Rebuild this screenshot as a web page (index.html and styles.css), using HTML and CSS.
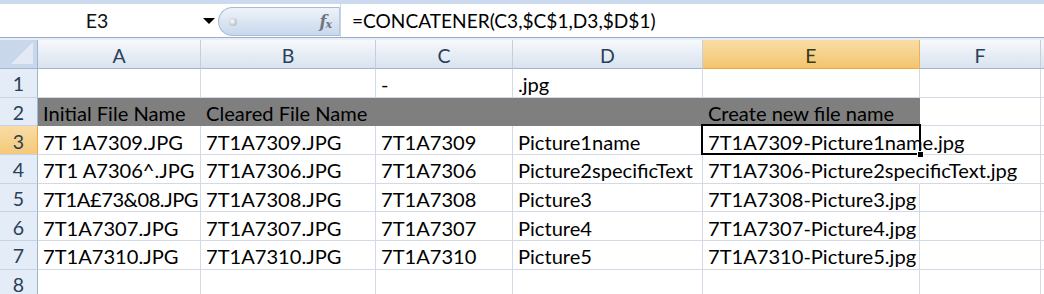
FILE: index.html
```html
<!DOCTYPE html>
<html>
<head>
<meta charset="utf-8">
<link rel="stylesheet" href="styles.css">
</head>
<body>
<div class="app">
  <div class="fbar">
    <div class="namebox">
      <span class="name">E3</span>
      <span class="arrow"></span>
    </div>
    <div class="pill">
      <span class="dot"></span>
      <span class="fx">f<sub>x</sub></span>
    </div>
    <div class="formula">=CONCATENER(C3,$C$1,D3,$D$1)</div>
  </div>
  <div class="gap"></div>
  <div class="sheet">
    <div class="corner"><span class="tri"></span></div>
    <div class="ch">A</div><div class="ch">B</div><div class="ch">C</div><div class="ch">D</div><div class="ch sel">E</div><div class="ch">F</div><div class="ch end"></div>

    <div class="rh">1</div>
    <div class="c"></div><div class="c"></div><div class="c">-</div><div class="c">.jpg</div><div class="c"></div><div class="c"></div><div class="c end"></div>

    <div class="rh">2</div>
    <div class="c g">Initial File Name</div><div class="c g">Cleared File Name</div><div class="c g"></div><div class="c g"></div><div class="c g">Create new file name</div><div class="c"></div><div class="c end"></div>

    <div class="rh sel">3</div>
    <div class="c">7T 1A7309.JPG</div><div class="c">7T1A7309.JPG</div><div class="c">7T1A7309</div><div class="c">Picture1name</div><div class="c active">7T1A7309-Picture1name.jpg<span class="handle"></span></div><div class="c"></div><div class="c end"></div>

    <div class="rh">4</div>
    <div class="c">7T1 A7306^.JPG</div><div class="c">7T1A7306.JPG</div><div class="c">7T1A7306</div><div class="c">Picture2specificText</div><div class="c nor">7T1A7306-Picture2specificText.jpg</div><div class="c"></div><div class="c end"></div>

    <div class="rh">5</div>
    <div class="c tight">7T1A£73&amp;08.JPG</div><div class="c">7T1A7308.JPG</div><div class="c">7T1A7308</div><div class="c">Picture3</div><div class="c">7T1A7308-Picture3.jpg</div><div class="c"></div><div class="c end"></div>

    <div class="rh">6</div>
    <div class="c">7T1A7307.JPG</div><div class="c">7T1A7307.JPG</div><div class="c">7T1A7307</div><div class="c">Picture4</div><div class="c">7T1A7307-Picture4.jpg</div><div class="c"></div><div class="c end"></div>

    <div class="rh">7</div>
    <div class="c">7T1A7310.JPG</div><div class="c">7T1A7310.JPG</div><div class="c">7T1A7310</div><div class="c">Picture5</div><div class="c">7T1A7310-Picture5.jpg</div><div class="c"></div><div class="c end"></div>

    <div class="rh">8</div>
    <div class="c"></div><div class="c"></div><div class="c"></div><div class="c"></div><div class="c"></div><div class="c"></div><div class="c end"></div>
  </div>
</div>
</body>
</html>
```

FILE: styles.css
```css
* { box-sizing: border-box; }
html, body { margin: 0; padding: 0; }
body {
  width: 1044px;
  height: 294px;
  overflow: hidden;
  background: #fff;
  font-family: Lato, "Open Sans", sans-serif;
  color: #000;
}
.app { display: flex; flex-direction: column; }

.fbar {
  height: 38px;
  display: flex;
  align-items: stretch;
  border-top: 4px solid #cbdaee;
  border-bottom: 1px solid #9aaecb;
  background: #fff;
}
.namebox {
  width: 218px;
  display: flex;
  align-items: center;
  position: relative;
}
.name {
  width: 194px;
  text-align: center;
  font-size: 19.5px;
  color: #111;
}
.arrow {
  width: 0; height: 0;
  border-left: 6px solid transparent;
  border-right: 6px solid transparent;
  border-top: 6px solid #000;
  margin-left: 9px;
}
.pill {
  width: 122px;
  margin: 3px 0 1px 0;
  border: 1px solid #a5bad6;
  border-right: 1px solid #b8c8dd;
  border-radius: 15px 0 0 15px;
  background: linear-gradient(#eef3fa, #d9e4f2 55%, #c8d8ee);
  display: flex;
  align-items: center;
  justify-content: space-between;
  padding: 0 8px 0 10px;
}
.dot {
  width: 8px; height: 8px;
  border-radius: 50%;
  background: radial-gradient(circle at 40% 40%, #ffffff, #9aa4b0);
}
.fx {
  font-family: "DejaVu Serif", "Liberation Serif", serif;
  font-style: italic;
  font-weight: bold;
  font-size: 16px;
  color: #6f7680;
  letter-spacing: -1px;
}
.fx sub { font-size: 11px; vertical-align: -1px; }
.formula {
  flex: 1;
  display: flex;
  align-items: center;
  padding-left: 11px;
  font-size: 19.1px;
  border-left: 1px solid #c9d4e2;
}
.gap {
  height: 2px;
  background: #e9eef6;
}

.sheet {
  display: grid;
  grid-template-columns: 38px 163px 175px 137px 190px 217px 121px 3px;
  grid-template-rows: 29px repeat(8, 28.67px);
  font-size: 20.1px;
}
.corner {
  background: #c9d7eb;
  border-right: 1px solid #9eb6ce;
  border-bottom: 1px solid #9eb6ce;
  position: relative;
  overflow: hidden;
}
.tri {
  position: absolute;
  right: 4px; bottom: 4px;
  width: 0; height: 0;
  border-left: 22px solid transparent;
  border-bottom: 22px solid #e3eaf5;
}
.ch {
  background: linear-gradient(#f7f9fc, #e4ebf4 60%, #dae3ee);
  border-right: 1px solid #c3cfdd;
  border-bottom: 1px solid #9eb6ce;
  color: #2a3f58;
  display: flex;
  align-items: center;
  justify-content: center;
  padding-top: 2px;
  font-size: 19.5px;
}
.ch.sel {
  background: linear-gradient(#f9dca6, #f6cf85 60%, #f2c46e);
  border-bottom: 1px solid #f2a83a;
  border-right: 1px solid #e9b25c;
  color: #3a3a1a;
}
.ch.end { border-right: none; }
.rh {
  background: #e4ecf7;
  border-right: 1px solid #9eb6ce;
  border-bottom: 1px solid #c5d3e5;
  color: #2a3f58;
  display: flex;
  align-items: center;
  justify-content: center;
  padding-top: 2px;
  font-size: 19.5px;
}
.rh.sel {
  background: linear-gradient(#f9dca6, #f4c978);
  border-right: 1px solid #f2a83a;
}
.c {
  border-right: 1px solid #d4dae5;
  border-bottom: 1px solid #d4dae5;
  white-space: nowrap;
  overflow: visible;
  padding: 3px 0 0 5px;
  display: flex;
  align-items: center;
  position: relative;
  min-width: 0;
}
.c.tight { letter-spacing: -0.45px; }
.c.end { border-right: none; }
.c.nor { border-right-color: transparent; }
.c.g {
  background: #7f7f7f;
  border-color: #7f7f7f;
}
.c.active {
  border-right-color: transparent;
}
.c.active::before {
  content: "";
  position: absolute;
  left: -2px; top: -2px; right: -2px; bottom: -1px;
  border: 2px solid #000;
  pointer-events: none;
}
.handle {
  position: absolute;
  right: -5px; bottom: -4px;
  width: 7px; height: 7px;
  background: #000;
  border: 1px solid #fff;
  z-index: 2;
}
```
